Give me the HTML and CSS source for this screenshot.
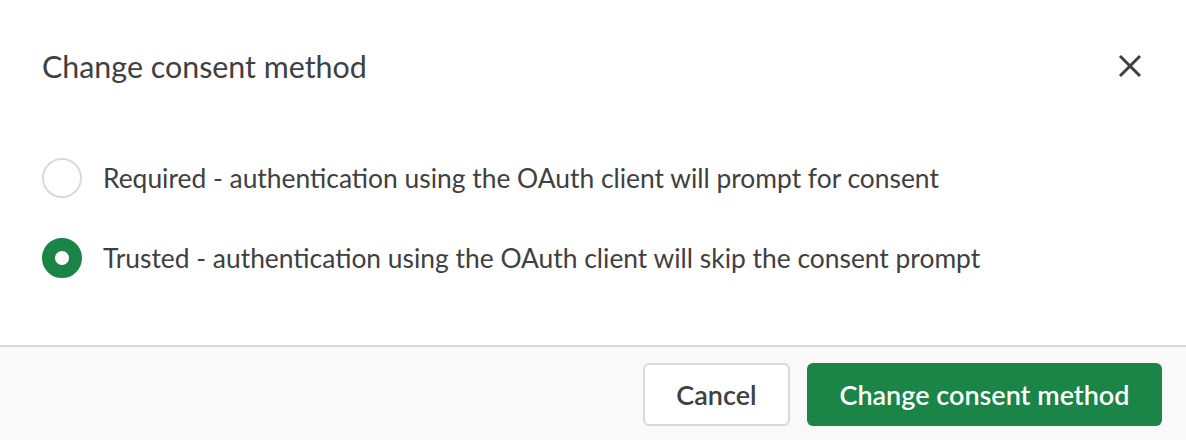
FILE: index.html
```html
<!DOCTYPE html>
<html lang="en">
<head>
  <meta charset="UTF-8">
  <title>Change consent method</title>
  <link rel="stylesheet" href="styles.css">
</head>
<body>
  <div class="dialog">
    <div class="dialog-header">
      <h1 class="dialog-title">Change consent method</h1>
      <button class="close-button" aria-label="Close">
        <svg width="24" height="24" viewBox="0 0 24 24">
          <path d="M2 2 L22 22 M22 2 L2 22" stroke="#404040" stroke-width="3" fill="none"/>
        </svg>
      </button>
    </div>

    <div class="dialog-body">
      <label class="radio-option">
        <input type="radio" name="consent" value="required">
        <span class="radio-mark"></span>
        <span class="radio-label">Required - authentication using the OAuth client will prompt for consent</span>
      </label>
      <label class="radio-option">
        <input type="radio" name="consent" value="trusted" checked>
        <span class="radio-mark"></span>
        <span class="radio-label">Trusted - authentication using the OAuth client will skip the consent prompt</span>
      </label>
    </div>

    <div class="dialog-footer">
      <button class="btn btn-secondary">Cancel</button>
      <button class="btn btn-primary">Change consent method</button>
    </div>
  </div>
</body>
</html>
```

FILE: styles.css
```css
:root {
  --primary: #1a8546;
  --text: #404040;
  --border: #d9d9d9;
  --footer-bg: #f9f9f9;
}

* {
  margin: 0;
  padding: 0;
  box-sizing: border-box;
  font-family: Lato, 'Open Sans', sans-serif;
}

body {
  background-color: #ffffff;
  color: var(--text);
  width: 1186px;
  height: 440px;
  overflow: hidden;
}

.dialog {
  display: flex;
  flex-direction: column;
  height: 440px;
}

.dialog-header {
  display: flex;
  justify-content: space-between;
  align-items: center;
  padding: 48px 44px 0 42px;
  height: 84px;
}

.dialog-title {
  font-size: 30.4px;
  font-weight: 400;
  line-height: 36px;
}

.close-button {
  background: none;
  border: none;
  width: 24px;
  height: 24px;
  cursor: pointer;
  display: flex;
}

.dialog-body {
  flex: 1;
  display: flex;
  flex-direction: column;
  gap: 40px;
  padding: 74px 42px 0;
}

.radio-option {
  display: flex;
  align-items: center;
  gap: 21px;
  cursor: pointer;
}

.radio-option input {
  display: none;
}

.radio-mark {
  width: 40px;
  height: 40px;
  border-radius: 50%;
  border: 2px solid var(--border);
  background: #fff;
  flex-shrink: 0;
}

.radio-option input:checked + .radio-mark {
  border: 13px solid var(--primary);
}

.radio-label {
  font-size: 26.4px;
  line-height: 40px;
}

.dialog-footer {
  height: 95px;
  background-color: var(--footer-bg);
  border-top: 2px solid var(--border);
  display: flex;
  justify-content: flex-end;
  align-items: flex-start;
  gap: 17px;
  padding: 16px 24px 0;
}

.btn {
  height: 63px;
  border-radius: 6px;
  font-size: 27px;
  font-weight: 600;
  cursor: pointer;
  display: flex;
  align-items: center;
  justify-content: center;
}

.btn-secondary {
  width: 147px;
  background: #ffffff;
  color: var(--text);
  border: 2px solid var(--border);
}

.btn-primary {
  width: 355px;
  background: var(--primary);
  color: #ffffff;
  border: none;
}
```
